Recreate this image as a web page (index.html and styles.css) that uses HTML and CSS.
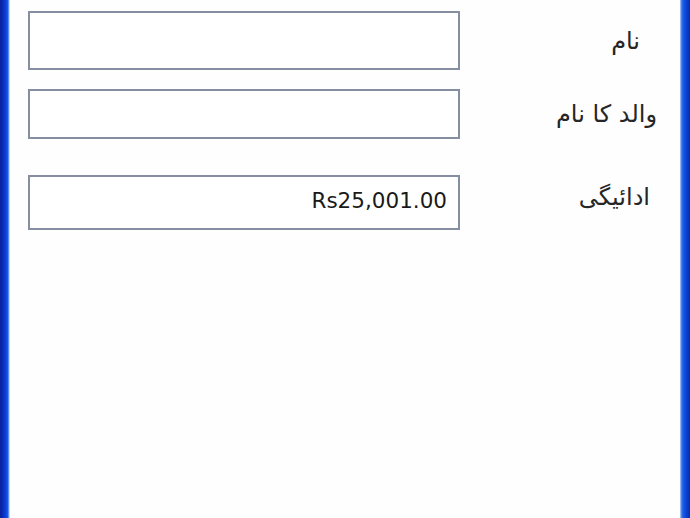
FILE: index.html
```html
<!DOCTYPE html>
<html lang="ur">
<head>
<meta charset="utf-8">
<title>Form</title>
<link rel="stylesheet" href="styles.css">
</head>
<body>
<div class="window">
  <div class="frame frame-left"></div>
  <main class="client">
    <div class="form">
      <div class="field field-name"><input class="box" type="text" value=""></div>
      <label class="lbl lbl-name">نام</label>

      <div class="field field-parent"><input class="box" type="text" value=""></div>
      <label class="lbl lbl-parent">والد کا نام</label>

      <div class="field field-pay"><input class="box box-pay" type="text" value="Rs25,001.00"></div>
      <label class="lbl lbl-pay">ادائیگی</label>
    </div>
  </main>
  <div class="frame frame-right"></div>
</div>
</body>
</html>
```

FILE: styles.css
```css
html, body {
  margin: 0;
  padding: 0;
  background: #ffffff;
}

.window {
  display: flex;
  width: 690px;
  height: 518px;
  overflow: hidden;
}

.frame {
  flex: 0 0 auto;
  height: 100%;
}

.frame-left {
  width: 10px;
  background: linear-gradient(to right, #0a1f98 0px, #0a2cbc 3px, #0b44dc 6px, #1a5cec 8px, #9ec0f6 9px, #e8f0fc 10px);
}

.frame-right {
  width: 10px;
  background: linear-gradient(to right, #c8dcf8 0px, #5a90f0 1px, #1a5ae6 3px, #0a44d4 6px, #0a2aa8 10px);
}

.client {
  flex: 1 1 auto;
  background: #fefefe;
}

.form {
  display: grid;
  grid-template-columns: 432px 1fr;
  grid-template-rows: 59px 69px 91px;
  padding: 11px 0 0 18px;
  font-family: "DejaVu Sans", "Liberation Sans", sans-serif;
}

.field {
  display: flex;
}

.field-parent {
  margin-top: 19px;
}

.field-pay {
  margin-top: 36px;
}

.field-name .box { height: 59px; }
.field-parent .box { height: 50px; }
.field-pay .box { height: 55px; }

.box {
  box-sizing: border-box;
  width: 432px;
  margin: 0;
  border: 2px solid #868fa2;
  border-radius: 0;
  background: #ffffff;
  outline: none;
  font-family: "DejaVu Sans", "Liberation Sans", sans-serif;
  font-size: 21.5px;
  color: #1a1a1a;
  padding: 0 11px 4px 11px;
}

.box-pay {
  text-align: right;
}

.lbl {
  direction: rtl;
  font-family: "DejaVu Sans", sans-serif;
  font-size: 24px;
  color: #262626;
  white-space: nowrap;
  align-self: start;
  justify-self: end;
}

.lbl-name {
  margin-right: 40px;
  margin-top: 16px;
}

.lbl-parent {
  margin-right: 23px;
  margin-top: 30px;
}

.lbl-pay {
  margin-right: 30px;
  margin-top: 44px;
}
```
